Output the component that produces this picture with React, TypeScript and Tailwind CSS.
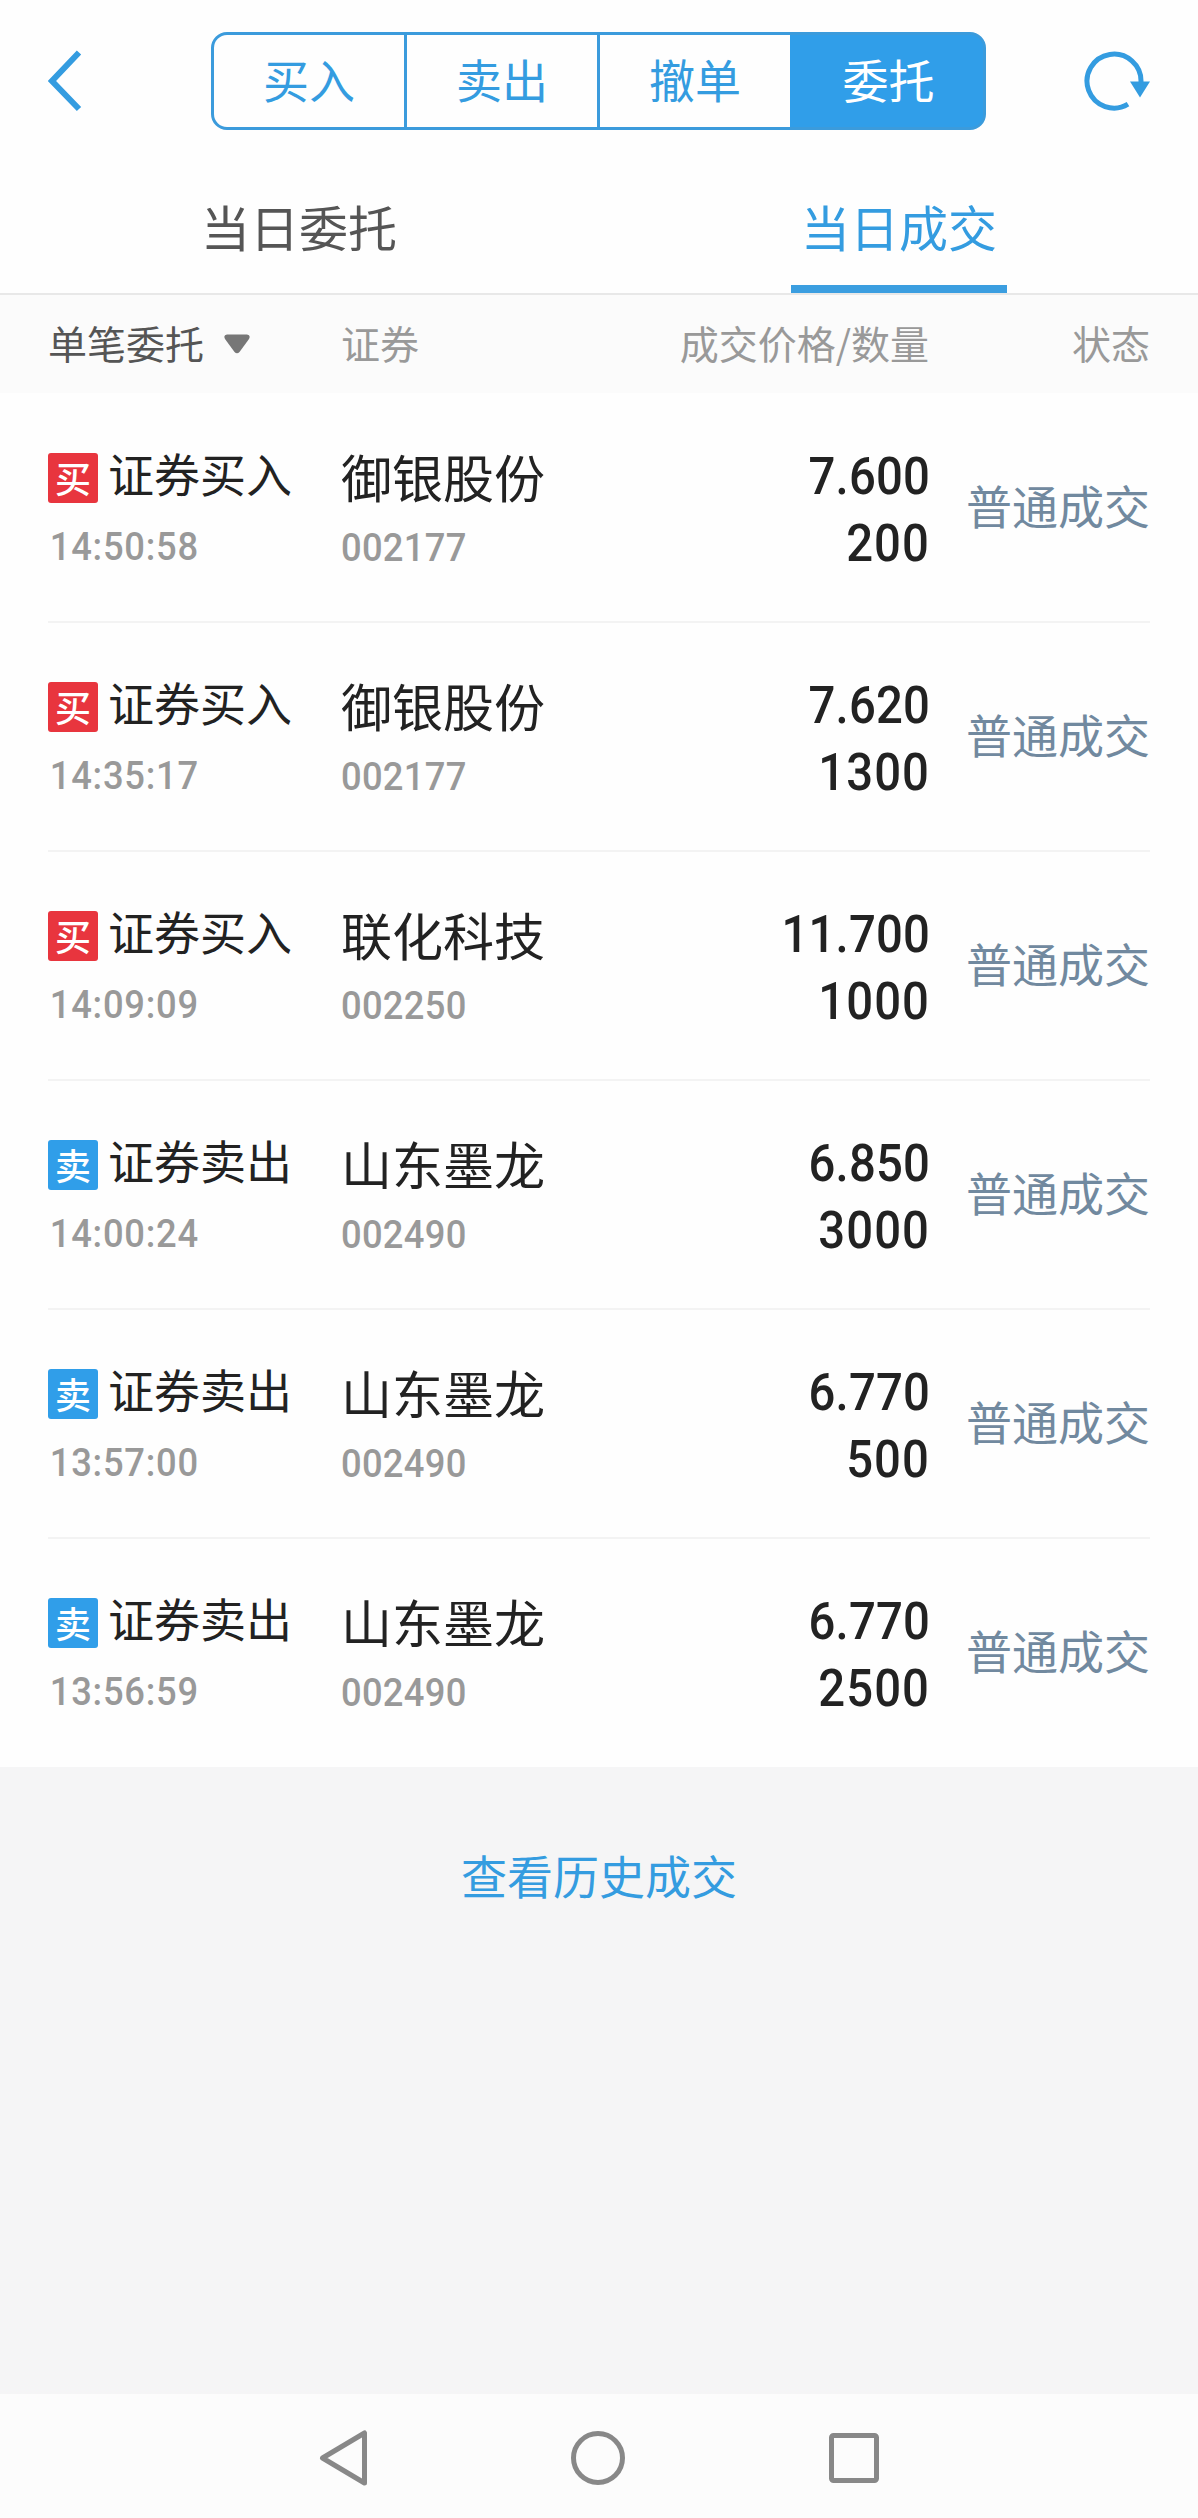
import clsx from "clsx";

type Trade = {
  side: "buy" | "sell";
  time: string;
  name: string;
  code: string;
  price: string;
  amount: string;
};

const trades: Trade[] = [
  { side: "buy", time: "14:50:58", name: "御银股份", code: "002177", price: "7.600", amount: "200" },
  { side: "buy", time: "14:35:17", name: "御银股份", code: "002177", price: "7.620", amount: "1300" },
  { side: "buy", time: "14:09:09", name: "联化科技", code: "002250", price: "11.700", amount: "1000" },
  { side: "sell", time: "14:00:24", name: "山东墨龙", code: "002490", price: "6.850", amount: "3000" },
  { side: "sell", time: "13:57:00", name: "山东墨龙", code: "002490", price: "6.770", amount: "500" },
  { side: "sell", time: "13:56:59", name: "山东墨龙", code: "002490", price: "6.770", amount: "2500" },
];

const segments = ["买入", "卖出", "撤单", "委托"];

const columns = "grid grid-cols-[293px_294px_294px_221px] px-12";

function TopBar() {
  return (
    <header className="flex h-[162px] items-start justify-between px-12 pt-8">
      <button className="flex h-[98px] w-[163px] items-center">
        <svg width="36" height="62" viewBox="0 0 36 62" fill="none" stroke="#349ce0" strokeWidth="6">
          <path d="M31 2.5 4 31l27 28" />
        </svg>
      </button>

      <div className="flex h-[98px] w-[775px] overflow-hidden rounded-2xl border-[3px] border-[#3b9bdc] bg-[linear-gradient(to_right,transparent_75%,#309ee9_75%)]">
        {segments.map((label, i) => (
          <button
            key={label}
            className={clsx(
              "pb-1.5 text-[46px] leading-none",
              i === 2 ? "w-[190px]" : "w-[193px]",
              i === 3 ? "bg-[#309ee9] pl-1 text-white" : "text-[#349ce0]",
              i < 2 && "border-r-[3px] border-[#3b9bdc]"
            )}
          >
            {label}
          </button>
        ))}
      </div>

      <button className="flex h-[98px] w-[164px] items-center justify-end">
        <svg width="66" height="62" viewBox="0 0 66 62" fill="none">
          <path d="M44 54.2A27 27 0 1 1 57 32" stroke="#349ce0" strokeWidth="5" />
          <path d="M46 31.500h20L56 47.500z" fill="#349ce0" />
        </svg>
      </button>
    </header>
  );
}

function Tabs() {
  return (
    <nav className="flex h-[133px] border-b-2 border-[#e8e8e8] text-[49px] leading-[127px]">
      <button className="flex flex-1 justify-center pr-0.5 text-[#555555]">当日委托</button>
      <button className="flex flex-1 justify-center text-[#349ce0]">
        <span className="h-[131px] w-[216px] border-b-8 border-[#3b9ee0] text-center">当日成交</span>
      </button>
    </nav>
  );
}

function TableHead() {
  return (
    <div className={`${columns} h-[98px] bg-[#fbfbfb] text-[39px] leading-[94px] text-[#999999]`}>
      <div className="flex h-[94px] items-center text-[#555555]">
        单笔委托
        <svg className="ml-5 mt-1" width="26" height="20" viewBox="0 0 26 20">
          <path d="M3 0.500h20q4 0.500 2 4.500l-9.500 13q-2.500 2.500-5 0L1 5Q-1 1 3 0.500z" fill="#777777" />
        </svg>
      </div>
      <div>证券</div>
      <div className="text-right">成交价格/数量</div>
      <div className="text-right">状态</div>
    </div>
  );
}

function TradeRow({ trade, last }: { trade: Trade; last: boolean }) {
  const buy = trade.side === "buy";
  return (
    <li>
      <div className={`${columns} h-[228px] text-[#222222]`}>
        <div className="pt-[49px]">
          <div className="flex gap-2.5">
            <span
              className={clsx(
                "mt-[11px] h-[50px] w-[50px] rounded-[3px] text-center text-[36px] font-medium leading-[48px] text-white",
                buy ? "bg-[#e8353e]" : "bg-[#309ee9]"
              )}
            >
              {buy ? "买" : "卖"}
            </span>
            <span className="text-[46px] leading-[60px]">{buy ? "证券买入" : "证券卖出"}</span>
          </div>
          <p className="mt-[20px] origin-left scale-x-[0.92] pl-0.5 font-[Roboto] text-[39.500px] font-medium leading-[48px] tracking-[0.8px] text-[#999999]">
            {trade.time}
          </p>
        </div>
        <div className="pt-[53px]">
          <p className="text-[51px] leading-[60px]">{trade.name}</p>
          <p className="mt-[18px] origin-left scale-x-[0.92] font-[Roboto] text-[39.500px] font-medium leading-[48px] tracking-[0.3px] text-[#999999]">
            {trade.code}
          </p>
        </div>
        <div className="-mr-px origin-right scale-x-90 pt-[50px] text-right font-[Roboto] text-[52.500px] font-medium leading-[67px]">
          <p className="tracking-[0.2px]">{trade.price}</p>
          <p className="tracking-[1.2px]">{trade.amount}</p>
        </div>
        <div className="text-right text-[46px] leading-[223px] text-[#71899f]">普通成交</div>
      </div>
      <div className={clsx("mx-12 h-px", !last && "border-b border-[#f3f3f3] shadow-[0_1px_0_#f3f3f3]")} />
    </li>
  );
}

function SystemNav() {
  return (
    <footer className="flex h-[124px] items-center bg-[#fcfcfc] pl-[319px] pt-[3px] text-[#888888]">
      <svg width="49" height="56" viewBox="0 0 49 56" fill="none" stroke="currentColor" strokeWidth="5" strokeLinejoin="round">
        <path d="M45.500 3v50L3.500 28z" />
      </svg>
      <svg className="ml-[202px]" width="56" height="56" viewBox="0 0 56 56" fill="none" stroke="currentColor" strokeWidth="5">
        <circle cx="28" cy="28" r="24.500" />
      </svg>
      <svg className="ml-[203px]" width="50" height="50" viewBox="0 0 50 50" fill="none" stroke="currentColor" strokeWidth="5">
        <rect x="2.500" y="2.500" width="45" height="45" rx="2" />
      </svg>
    </footer>
  );
}

export default function App() {
  return (
    <main className="flex h-[2518px] w-[1198px] flex-col bg-[#f5f5f6] font-['Noto_Sans_CJK_SC',sans-serif]">
      <div className="bg-[#fefefe]">
        <TopBar />
        <Tabs />
        <TableHead />
        <ul>
          {trades.map((trade, i) => (
            <TradeRow key={trade.time} trade={trade} last={i === trades.length - 1} />
          ))}
        </ul>
      </div>
      <div className="flex-1 pt-[77px] text-center">
        <a className="text-[46px] leading-[60px] text-[#349ce0]">查看历史成交</a>
      </div>
      <SystemNav />
    </main>
  );
}
